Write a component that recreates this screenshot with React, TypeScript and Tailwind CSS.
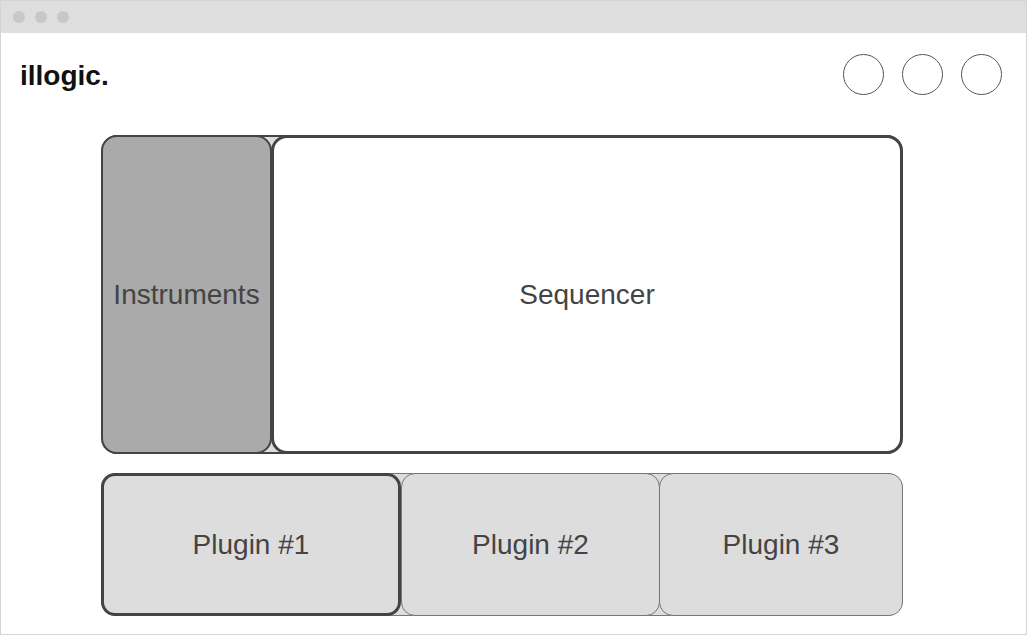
import React from "react";

const font = { fontFamily: '"Liberation Sans", Arial, sans-serif' };

function Dot() {
  return <span className="h-[12px] w-[12px] rounded-full bg-[#c8c8c8]" />;
}

function Circle() {
  return <div className="h-[41px] w-[41px] rounded-full border border-[#555] bg-white" />;
}

export default function App() {
  return (
    <div
      style={font}
      className="flex h-[635px] w-[1027px] flex-col overflow-hidden border border-[#d4d4d4] bg-white text-[#444]"
    >
      {/* Title bar */}
      <div className="flex h-[32px] shrink-0 items-center gap-[10px] bg-[#dedede] pl-[12px]">
        <Dot />
        <Dot />
        <Dot />
      </div>

      {/* Header */}
      <div className="flex h-[82px] shrink-0 items-center justify-between pl-[19px] pr-[24px]">
        <div className="pt-[4px] text-[28px] font-bold leading-none text-[#111]">illogic.</div>
        <div className="flex items-center gap-[18px]">
          <Circle />
          <Circle />
          <Circle />
        </div>
      </div>

      {/* Main */}
      <div className="ml-[100px] mt-[20px] flex w-[802px] flex-col gap-[19px]">
        <div className="flex h-[319px] rounded-[16px] border-y-2 border-[#444] bg-[#ddd]">
          <div className="-my-[2px] flex w-[171px] shrink-0 items-center justify-center rounded-[16px] border-2 border-[#444] bg-[#aaa] text-[28px]">
            Instruments
          </div>
          <div className="-my-[2px] -ml-[1px] flex flex-1 items-center justify-center rounded-[16px] border-[3px] border-[#444] bg-white text-[28px]">
            Sequencer
          </div>
        </div>

        <div className="flex h-[143px] rounded-[16px] border-y border-[#777] bg-[#ddd]">
          <div className="-my-[1px] flex w-[300px] shrink-0 items-center justify-center rounded-[14px] border-[3px] border-[#444] bg-[#ddd] text-[28px]">
            Plugin #1
          </div>
          <div className="-my-[1px] flex w-[259px] shrink-0 items-center justify-center rounded-[14px] border border-[#777] bg-[#ddd] text-[28px]">
            Plugin #2
          </div>
          <div className="-my-[1px] -ml-[1px] flex flex-1 items-center justify-center rounded-[14px] border border-[#777] bg-[#ddd] text-[28px]">
            Plugin #3
          </div>
        </div>
      </div>
    </div>
  );
}
